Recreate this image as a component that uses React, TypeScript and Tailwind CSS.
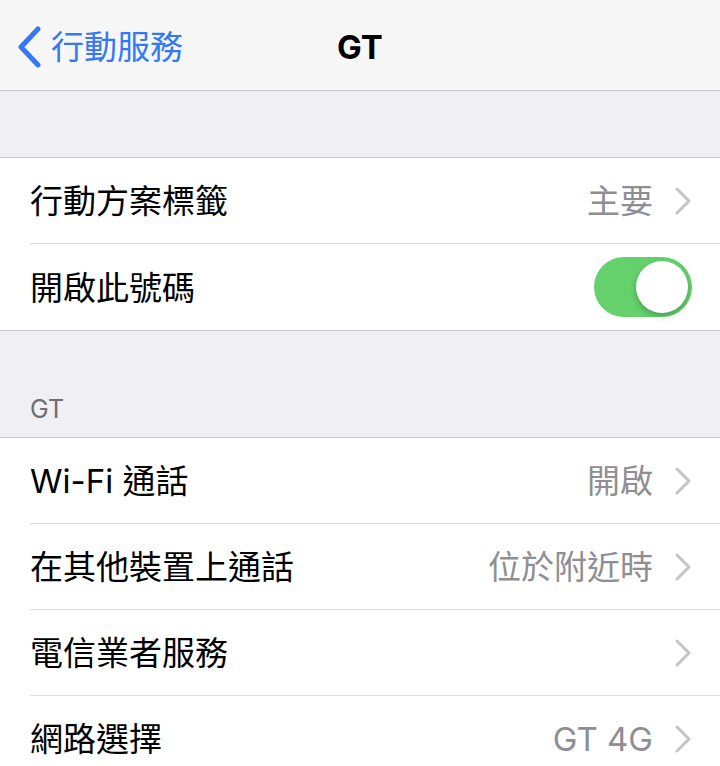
import React from "react";

const font = { fontFamily: '"Inter", "Noto Sans CJK TC", sans-serif' };

function Chevron() {
  return (
    <svg width="18" height="28" viewBox="0 0 18 28" className="shrink-0">
      <path d="M3 2 L15 14 L3 26" fill="none" stroke="#c4c4c8" strokeWidth="3" strokeLinecap="round" strokeLinejoin="round" />
    </svg>
  );
}

function Row({ label, value, chevron = true, last = false, children }: { label: string; value?: string; chevron?: boolean; last?: boolean; children?: React.ReactNode }) {
  return (
    <div className="flex h-[86px] items-stretch bg-white pl-[30px]">
      <div className={`flex flex-1 items-center pr-[28px] ${last ? "" : "border-b border-[#dcdcdf]"}`}>
        <div className="flex-1 pt-[2px] text-[33px] leading-none text-black">{label}</div>
        {value && <div className="mr-[21px] pt-[2px] text-[33px] leading-none text-[#8e8e93]">{value}</div>}
        {chevron && <Chevron />}
        {children}
      </div>
    </div>
  );
}

function Toggle() {
  return (
    <div className="relative h-[60px] w-[98px] rounded-full bg-[#65d16d]">
      <div className="absolute right-[4px] top-[4px] h-[52px] w-[52px] rounded-full bg-white shadow-[0_3px_6px_rgba(0,0,0,0.25)]" />
    </div>
  );
}

export default function App() {
  return (
    <div className="h-[766px] w-[720px] overflow-hidden bg-[#efeff4]" style={font}>
      <div className="relative flex h-[91px] items-center border-b border-[#c8c7cc] bg-[#f7f7f8]">
        <div className="flex items-center pl-[17px] pt-[4px]">
          <svg width="26" height="42" viewBox="0 0 26 42">
            <path d="M21 3 L4 21 L21 39" fill="none" stroke="#3478f6" strokeWidth="5" strokeLinecap="round" strokeLinejoin="round" />
          </svg>
          <span className="ml-[8px] text-[33px] leading-none text-[#3478f6]">行動服務</span>
        </div>
        <div className="absolute left-0 right-0 top-[31px] text-center text-[33px] font-bold leading-none text-black">GT</div>
      </div>
      <div className="h-[66px]" />
      <div className="border-y border-[#c8c7cc]">
        <Row label="行動方案標籤" value="主要" />
        <Row label="開啟此號碼" chevron={false} last>
          <Toggle />
        </Row>
      </div>
      <div className="flex h-[106px] items-end pb-[15px] pl-[30px] text-[25px] leading-none text-[#6d6d72]">GT</div>
      <div className="border-t border-[#c8c7cc]">
        <Row label="Wi-Fi 通話" value="開啟" />
        <Row label="在其他裝置上通話" value="位於附近時" />
        <Row label="電信業者服務" />
        <Row label="網路選擇" value="GT 4G" />
      </div>
    </div>
  );
}
